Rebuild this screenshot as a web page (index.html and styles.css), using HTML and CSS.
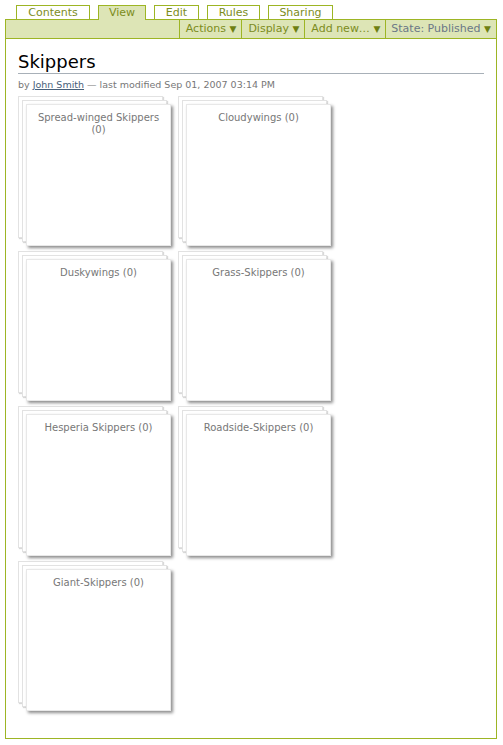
FILE: index.html
```html
<!DOCTYPE html>
<html>
<head>
<meta charset="utf-8">
<link rel="stylesheet" href="styles.css">
</head>
<body>
<div class="page">
  <ul class="tabs">
    <li class="tab tab-contents">Contents</li>
    <li class="tab tab-view active">View</li>
    <li class="tab tab-edit">Edit</li>
    <li class="tab tab-rules">Rules</li>
    <li class="tab tab-sharing">Sharing</li>
  </ul>
  <div class="box">
    <div class="bar">
      <span class="menu">Actions <span class="arrow">▼</span></span>
      <span class="menu">Display <span class="arrow">▼</span></span>
      <span class="menu">Add new… <span class="arrow">▼</span></span>
      <span class="menu state">State: Published <span class="arrow">▼</span></span>
    </div>
    <div class="content">
      <h1 class="title">Skippers</h1>
      <p class="byline">by <a class="author" href="#">John Smith</a> — last modified Sep 01, 2007 03:14 PM</p>
      <div class="grid">
        <div class="stack"><div class="card">Spread-winged Skippers (0)</div></div>
        <div class="stack"><div class="card">Cloudywings (0)</div></div>
        <div class="stack"><div class="card">Duskywings (0)</div></div>
        <div class="stack"><div class="card">Grass-Skippers (0)</div></div>
        <div class="stack"><div class="card">Hesperia Skippers (0)</div></div>
        <div class="stack"><div class="card">Roadside-Skippers (0)</div></div>
        <div class="stack"><div class="card">Giant-Skippers (0)</div></div>
      </div>
    </div>
  </div>
</div>
</body>
</html>
```
FILE: styles.css
```css
html, body {
  margin: 0;
  padding: 0;
  background: #fff;
}
body {
  font-family: "DejaVu Sans", "Noto Sans", sans-serif;
  font-size: 11px;
}
.page {
  margin: 5px 0 0 5px;
  width: 492px;
}
.tabs {
  list-style: none;
  margin: 0;
  padding: 0 0 0 11px;
  display: flex;
  gap: 8px;
  position: relative;
  z-index: 2;
  height: 14px;
}
.tab {
  box-sizing: border-box;
  border: 1px solid #9db524;
  border-bottom: none;
  background: #fff;
  color: #7c8c1c;
  font-size: 11px;
  line-height: 13px;
  height: 14px;
  padding: 0;
  text-align: center;
}
.tab-contents { width: 74px; }
.tab-view { width: 48px; }
.tab-edit { width: 45px; }
.tab-rules { width: 53px; }
.tab-sharing { width: 65px; }
.tab.active {
  background: #dde5b6;
  height: 15px;
}
.box {
  border: 1px solid #9db524;
  border-top: none;
  height: 719px;
}
.bar {
  background: #dde5b6;
  border-top: 1px solid #9db524;
  border-bottom: 1px solid #9db524;
  height: 18px;
  display: flex;
  justify-content: flex-end;
}
.menu {
  border-left: 1px solid #9db524;
  color: #7c8c1c;
  font-size: 11px;
  line-height: 18px;
  padding: 0 5px 0 6px;
}
.menu.state {
  color: #6b7886;
  padding-left: 5px;
}
.arrow {
  color: #6f8012;
  font-size: 9px;
}
.content {
  padding: 0 12px;
}
.title {
  margin: 11px 0 0;
  font-family: "DejaVu Sans", sans-serif;
  font-weight: normal;
  font-size: 18px;
  line-height: 23px;
  color: #000;
  border-bottom: 1px solid #a8b0b8;
  padding-bottom: 0;
}
.byline {
  margin: 4px 0 0;
  color: #777;
  font-size: 9.5px;
  line-height: 14px;
}
.author {
  color: #48607a;
  text-decoration: underline;
}
.grid {
  margin-top: 4px;
  display: grid;
  grid-template-columns: repeat(2, 153px);
  grid-auto-rows: 150px;
  column-gap: 7px;
  row-gap: 5px;
}
.stack {
  position: relative;
  width: 153px;
  height: 150px;
}
.stack::before,
.stack::after {
  content: "";
  position: absolute;
  width: 143px;
  height: 140px;
  background: #fff;
  border: 1px solid #e2e2e2;
  box-shadow: 1px 1px 1px rgba(0,0,0,0.15);
}
.stack::before {
  left: 0;
  top: 0;
}
.stack::after {
  left: 4px;
  top: 4px;
}
.card {
  position: absolute;
  left: 8px;
  top: 8px;
  width: 145px;
  height: 142px;
  box-sizing: border-box;
  background: #fff;
  border: 1px solid #e8e8e8;
  box-shadow: 2px 2px 3px rgba(0,0,0,0.45);
  z-index: 1;
  padding: 7px 8px 0;
  text-align: center;
  color: #777;
  font-size: 10px;
  line-height: 12px;
}
```
